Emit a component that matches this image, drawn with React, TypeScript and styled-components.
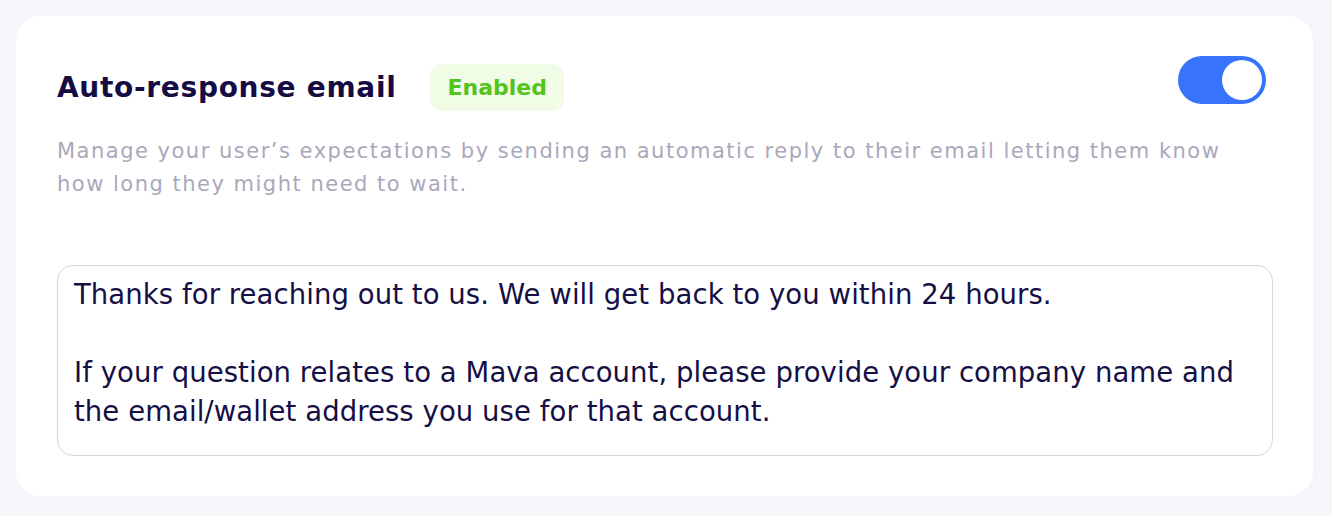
import React from "react";
import styled, { createGlobalStyle } from "styled-components";

const Global = createGlobalStyle`
  html, body { margin: 0; padding: 0; background: #f5f5fa; }
  body { font-family: "DejaVu Sans", "Open Sans", sans-serif; }
  * { box-sizing: border-box; }
`;

const Page = styled.div`
  padding: 16px 19px 21px 16px;
  width: 1332px;
  height: 516px;
`;

const Card = styled.section`
  background: #ffffff;
  border-radius: 24px;
  padding: 40px 40px 40px 41px;
  display: flex;
  flex-direction: column;
`;

const Header = styled.div`
  display: flex;
  align-items: flex-start;
  justify-content: space-between;
  padding-right: 7px;
`;

const TitleGroup = styled.div`
  display: flex;
  align-items: center;
  gap: 34px;
  height: 47px;
  margin-top: 8px;
`;

const Title = styled.h2`
  margin: 0;
  font-size: 28px;
  line-height: 34px;
  font-weight: 700;
  color: #140c42;
  letter-spacing: 0.7px;
`;

const Badge = styled.span`
  display: inline-flex;
  align-items: center;
  height: 47px;
  padding: 0 17px;
  border-radius: 12px;
  background: #f1fce7;
  color: #52c41a;
  font-size: 22px;
  font-weight: 700;
`;

const Toggle = styled.button<{ $on: boolean }>`
  width: 88px;
  height: 48px;
  border: none;
  padding: 4px;
  border-radius: 24px;
  background: ${(p) => (p.$on ? "#3774fb" : "#d9d9e6")};
  display: flex;
  justify-content: ${(p) => (p.$on ? "flex-end" : "flex-start")};
  cursor: pointer;
`;

const Knob = styled.span`
  width: 40px;
  height: 40px;
  border-radius: 50%;
  background: #ffffff;
`;

const Description = styled.p`
  margin: 24px 0 0;
  max-width: 1190px;
  font-size: 21px;
  line-height: 33px;
  color: #a9a8bc;
  font-weight: 400;
  letter-spacing: 1.5px;
`;

const Message = styled.textarea`
  margin-top: 64px;
  width: 1216px;
  height: 191px;
  border: 1.5px solid #d6d5e3;
  border-radius: 16px;
  padding: 9px 16px;
  font-family: inherit;
  font-size: 27.5px;
  line-height: 39px;
  letter-spacing: 0.07px;
  color: #150f45;
  resize: none;
  outline: none;
  background: #fff;
`;

const text =
  "Thanks for reaching out to us. We will get back to you within 24 hours.\n\nIf your question relates to a Mava account, please provide your company name and the email/wallet address you use for that account.";

export default function App() {
  const [on, setOn] = React.useState(true);
  return (
    <Page>
      <Global />
      <Card>
        <Header>
          <TitleGroup>
            <Title>Auto-response email</Title>
            <Badge>Enabled</Badge>
          </TitleGroup>
          <Toggle $on={on} onClick={() => setOn(!on)} aria-label="Toggle auto-response">
            <Knob />
          </Toggle>
        </Header>
        <Description>
          Manage your user’s expectations by sending an automatic reply to their email letting them know
          how long they might need to wait.
        </Description>
        <Message defaultValue={text} />
      </Card>
    </Page>
  );
}
